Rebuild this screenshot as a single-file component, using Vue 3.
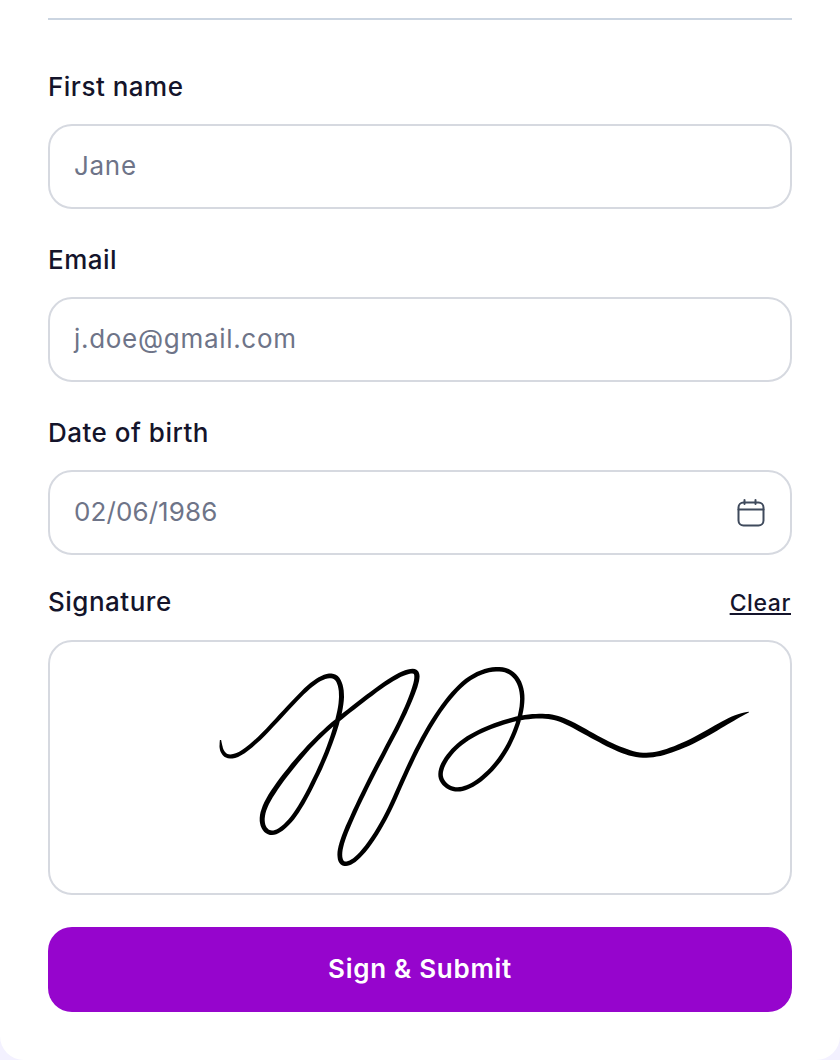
<template>
  <div class="page">
    <form class="sign-form" @submit.prevent>
      <div class="divider"></div>

      <div v-for="field in fields" :key="field.label" :class="['field', field.cls]">
        <label class="field-label">{{ field.label }}</label>
        <div class="input-box">
          <span class="placeholder">{{ field.placeholder }}</span>
          <svg v-if="field.icon" class="calendar" viewBox="0 0 28 28" fill="none" stroke="#3f4a5c" stroke-width="2" stroke-linecap="round" stroke-linejoin="round">
            <rect x="1.5" y="3.5" width="25" height="23" rx="5" />
            <path d="M1.5 10.5h25M7.5 1v4M18.5 1v4" />
          </svg>
        </div>
      </div>

      <div class="signature-field">
        <div class="signature-head">
          <label class="field-label">Signature</label>
          <a class="clear-link">Clear</a>
        </div>
        <div class="signature-box">
          <svg class="signature" viewBox="50 642 740 251">
            <path :d="signaturePath" fill="#000" />
          </svg>
        </div>
      </div>

      <button class="submit-btn" type="submit">Sign &amp; Submit</button>
    </form>
  </div>
</template>

<script setup>
import { computed } from 'vue'

const fields = [
  { label: 'First name', placeholder: 'Jane' },
  { label: 'Email', placeholder: 'j.doe@gmail.com' },
  { label: 'Date of birth', placeholder: '02/06/1986', icon: true, cls: 'field-date' }
]

// stroke traced as [x, y, width]
const strokePoints = [
  [220.5, 740, 1], [221, 747, 2.6], [223, 753, 3.2], [231, 758, 3.6], [250, 748, 3.4], [277, 720, 3.4],
  [300, 695, 3.4], [317, 680, 3.6], [332, 674.5, 4], [340, 682, 4], [342, 700, 4.2],
  [337, 723, 4], [327, 753, 3.6], [313, 783, 3.6], [297, 813, 3.6], [283, 828, 3.6], [272, 834, 3.8],
  [263, 828, 4], [262, 813, 4.2], [272, 793, 4.2], [293, 765, 4], [317, 738, 3.6],
  [340, 718, 3.6], [367, 697, 3.6], [393, 678, 3.6], [412, 670, 4], [418, 675, 4.4],
  [413, 693, 4], [400, 723, 3.6], [380, 760, 3.6], [360, 800, 3.6], [345, 833, 3.8], [339, 853, 4],
  [342, 864, 4], [350, 863, 3.6], [363, 853, 3.6], [383, 823, 3.6], [397, 793, 3.6],
  [413, 757, 3.6], [433, 720, 3.6], [453, 693, 3.6], [473, 675, 3.6], [497, 668, 3.8],
  [513, 673, 3.8], [522, 688, 3.8], [522, 710, 3.6], [513, 737, 3.6], [500, 760, 3.6],
  [483, 778, 3.6], [467, 788, 3.6], [453, 790, 3.6], [442, 782, 3.8], [440, 770, 3.8],
  [450, 753, 3.6], [467, 738, 3.6], [490, 727, 3.6], [517, 718, 3.8], [540, 716, 4],
  [557, 717.5, 4.2], [577, 727, 4.4], [600, 740, 4.4], [623, 751, 4.6], [643, 756, 4.2],
  [663, 753, 4.2], [687, 744, 4.6], [713, 730, 4.8], [733, 718, 4], [749, 712, 0.6]
]

function sampleStroke(points, steps) {
  const out = []
  for (let i = 0; i < points.length - 1; i++) {
    const p0 = points[Math.max(i - 1, 0)]
    const p1 = points[i]
    const p2 = points[i + 1]
    const p3 = points[Math.min(i + 2, points.length - 1)]
    for (let s = 0; s < steps; s++) {
      const t = s / steps
      const t2 = t * t
      const t3 = t2 * t
      const at = (k) => 0.5 * (2 * p1[k] + (p2[k] - p0[k]) * t + (2 * p0[k] - 5 * p1[k] + 4 * p2[k] - p3[k]) * t2 + (3 * p1[k] - p0[k] - 3 * p2[k] + p3[k]) * t3)
      out.push([at(0), at(1), p1[2] + (p2[2] - p1[2]) * t])
    }
  }
  out.push(points[points.length - 1])
  return out
}

// moving average, takes the hand-traced wobble out
function smooth(pts, radius) {
  return pts.map((p, i) => {
    const r = Math.min(radius, i, pts.length - 1 - i)
    const sum = [0, 0]
    for (let j = i - r; j <= i + r; j++) {
      sum[0] += pts[j][0]
      sum[1] += pts[j][1]
    }
    return [sum[0] / (2 * r + 1), sum[1] / (2 * r + 1), p[2]]
  })
}

// ribbon outline so the pen width can vary along the line
const signaturePath = computed(() => {
  const pts = smooth(sampleStroke(strokePoints, 6), 4)
  const left = []
  const right = []
  pts.forEach((p, i) => {
    const a = pts[Math.max(i - 1, 0)]
    const b = pts[Math.min(i + 1, pts.length - 1)]
    const dx = b[0] - a[0]
    const dy = b[1] - a[1]
    const len = Math.hypot(dx, dy) || 1
    const half = p[2] * 0.6
    const nx = (-dy / len) * half
    const ny = (dx / len) * half
    left.push((p[0] + nx).toFixed(1) + ' ' + (p[1] + ny).toFixed(1))
    right.unshift((p[0] - nx).toFixed(1) + ' ' + (p[1] - ny).toFixed(1))
  })
  return 'M' + left.concat(right).join('L') + 'Z'
})
</script>

<style scoped>
.page {
  width: 840px;
  height: 1060px;
  overflow: hidden;
  background: #f3f1ff;
  font-family: Inter, "Noto Sans", sans-serif;
}

.sign-form {
  height: 1060px;
  box-sizing: border-box;
  padding: 18px 48px 0;
  background: #fff;
  border-radius: 0 0 24px 24px;
  display: flex;
  flex-direction: column;
}

.divider {
  height: 2px;
  background: #cbd5e1;
  margin-bottom: 49px;
}

.field {
  display: flex;
  flex-direction: column;
  margin-bottom: 33px;
}

.field-date {
  margin-bottom: 29px;
}

.field-label {
  font-size: 26px;
  line-height: 36px;
  font-weight: 500;
  letter-spacing: 0.5px;
  color: #14142b;
}

.input-box {
  height: 85px;
  box-sizing: border-box;
  margin-top: 19px;
  padding: 0 25px 0 24px;
  display: flex;
  align-items: center;
  justify-content: space-between;
  background: #fff;
  border: 2px solid #d6d9e0;
  border-radius: 24px;
}

.placeholder {
  margin-top: -2px;
  font-size: 26px;
  letter-spacing: 0.7px;
  color: #6e7488;
}

.field-date .placeholder {
  letter-spacing: 0.1px;
}

.calendar {
  width: 28px;
  height: 28px;
}

.signature-head {
  display: flex;
  align-items: baseline;
  justify-content: space-between;
  height: 36px;
}

.clear-link {
  margin-right: 1px;
  font-size: 23px;
  font-weight: 500;
  letter-spacing: 0.6px;
  color: #14142b;
  text-decoration: underline;
  cursor: pointer;
}

.signature-box {
  height: 255px;
  box-sizing: border-box;
  margin-top: 20px;
  background: #fff;
  border: 2px solid #d6d9e0;
  border-radius: 24px;
}

.signature {
  display: block;
  width: 100%;
  height: 100%;
}

.submit-btn {
  height: 85px;
  margin-top: 32px;
  padding: 0 0 2px;
  border: none;
  border-radius: 24px;
  background: #9605cd;
  color: #fff;
  font-family: inherit;
  font-size: 26px;
  font-weight: 600;
  letter-spacing: 0.7px;
  cursor: pointer;
}
</style>
